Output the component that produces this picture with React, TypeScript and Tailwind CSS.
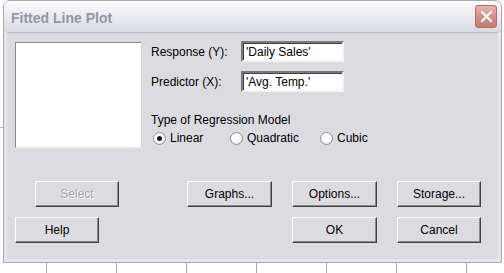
import React from "react";

type ButtonProps = {
  label: string;
  disabled?: boolean;
  className?: string;
};

function ClassicButton({ label, disabled, className = "" }: ButtonProps) {
  return (
    <div
      className={`flex h-[26px] items-center justify-center border border-t-[#ffffff] border-l-[#ffffff] border-r-[#404040] border-b-[#404040] bg-[#dcdce0] shadow-[inset_-1px_-1px_0_#8c8c8c] ${className}`}
    >
      <span
        className={
          disabled
            ? "text-[#a3a3a8] [text-shadow:1px_1px_0_#ffffff]"
            : "text-black"
        }
      >
        {label}
      </span>
    </div>
  );
}

function Radio({ label, checked }: { label: string; checked?: boolean }) {
  return (
    <div className="flex items-center">
      <span className="ml-[2px] flex h-[13px] w-[13px] items-center justify-center rounded-full border border-[#8d8d92] bg-[radial-gradient(circle_at_35%_35%,#ffffff_40%,#dcdcd8)]">
        {checked && <span className="h-[5px] w-[5px] rounded-full bg-[#1a1a1a]" />}
      </span>
      <span className="ml-[4px]">{label}</span>
    </div>
  );
}

function TextField({ value }: { value: string }) {
  return (
    <div className="flex h-[21px] w-[103px] items-center border-2 border-t-[#7a7a7a] border-l-[#7a7a7a] border-r-[#f4f4f4] border-b-[#f4f4f4] bg-white pl-[3px] shadow-[inset_1px_1px_0_#404040]">
      {value}
    </div>
  );
}

export default function App() {
  const gridLines = [46, 116, 186, 256, 326, 396, 466];

  return (
    <div className="h-[273px] w-[504px] overflow-hidden bg-white font-['Liberation_Sans',Arial,sans-serif] text-[12px] leading-[14px] text-black">
      <div className="flex">
        <div className="flex w-[3px] flex-col">
          <div className="h-[127px]" />
          <div className="h-px bg-[#b4b4b4]" />
        </div>

        {/* dialog window */}
        <div className="flex h-[263px] w-[499px] flex-col rounded-t-[7px] border border-[#a9a9b6] bg-[#e4e4ec]">
          <div className="flex h-[31px] items-start justify-between rounded-t-[6px] bg-[linear-gradient(#fdfdfe,#ececf2_45%,#dadae4)] pl-[7px] pr-[4px]">
            <span className="mt-[9px] text-[14px] font-bold leading-[17px] text-[#9496a3]">
              Fitted Line Plot
            </span>
            <div className="mt-[4px] flex h-[23px] w-[22px] items-center justify-center rounded-[3px] border border-[#b06e6a] bg-[linear-gradient(#eab4ae,#d68e88_50%,#c77a74)]">
              <svg width="13" height="13" viewBox="0 0 13 13">
                <path
                  d="M2 2 L11 11 M11 2 L2 11"
                  stroke="#ffffff"
                  strokeWidth="2.2"
                  strokeLinecap="round"
                />
              </svg>
            </div>
          </div>

          {/* client area */}
          <div className="mx-[3px] mb-[3px] flex flex-1 flex-col border-t border-[#b9b9c4] bg-[#dcdce0] pl-[8px] pt-[9px]">
            <div className="flex">
              <div className="h-[106px] w-[127px] border border-t-[#8a8a8a] border-l-[#8a8a8a] border-r-[#d6d6d0] border-b-[#ecece4] bg-white" />
              <div className="ml-[9px] mt-[-1px] flex flex-col">
                <div className="flex items-center">
                  <span className="w-[90px]">Response (Y):</span>
                  <TextField value="'Daily Sales'" />
                </div>
                <div className="mt-[9px] flex items-center">
                  <span className="w-[90px]">Predictor (X):</span>
                  <TextField value="'Avg. Temp.'" />
                </div>
                <div className="mt-[21px]">Type of Regression Model</div>
                <div className="mt-[4px] flex">
                  <div className="w-[77px]">
                    <Radio label="Linear" checked />
                  </div>
                  <div className="w-[90px]">
                    <Radio label="Quadratic" />
                  </div>
                  <Radio label="Cubic" />
                </div>
              </div>
            </div>

            <div className="mt-[33px] flex">
              <ClassicButton label="Select" disabled className="ml-[20px] w-[84px]" />
              <ClassicButton label="Graphs..." className="ml-[68px] w-[85px]" />
              <ClassicButton label="Options..." className="ml-[20px] w-[85px]" />
              <ClassicButton label="Storage..." className="ml-[20px] w-[84px]" />
            </div>
            <div className="mt-[10px] flex">
              <ClassicButton label="Help" className="w-[84px]" />
              <ClassicButton label="OK" className="ml-[193px] w-[85px]" />
              <ClassicButton label="Cancel" className="ml-[20px] w-[84px]" />
            </div>
          </div>
        </div>
      </div>

      {/* chart behind the dialog */}
      <div className="flex h-[10px]">
        {gridLines.map((x, i) => (
          <div
            key={x}
            className={`h-full w-px bg-[#a8a8a8] ${i === 0 ? "ml-[46px]" : "ml-[69px]"}`}
          />
        ))}
      </div>
    </div>
  );
}
